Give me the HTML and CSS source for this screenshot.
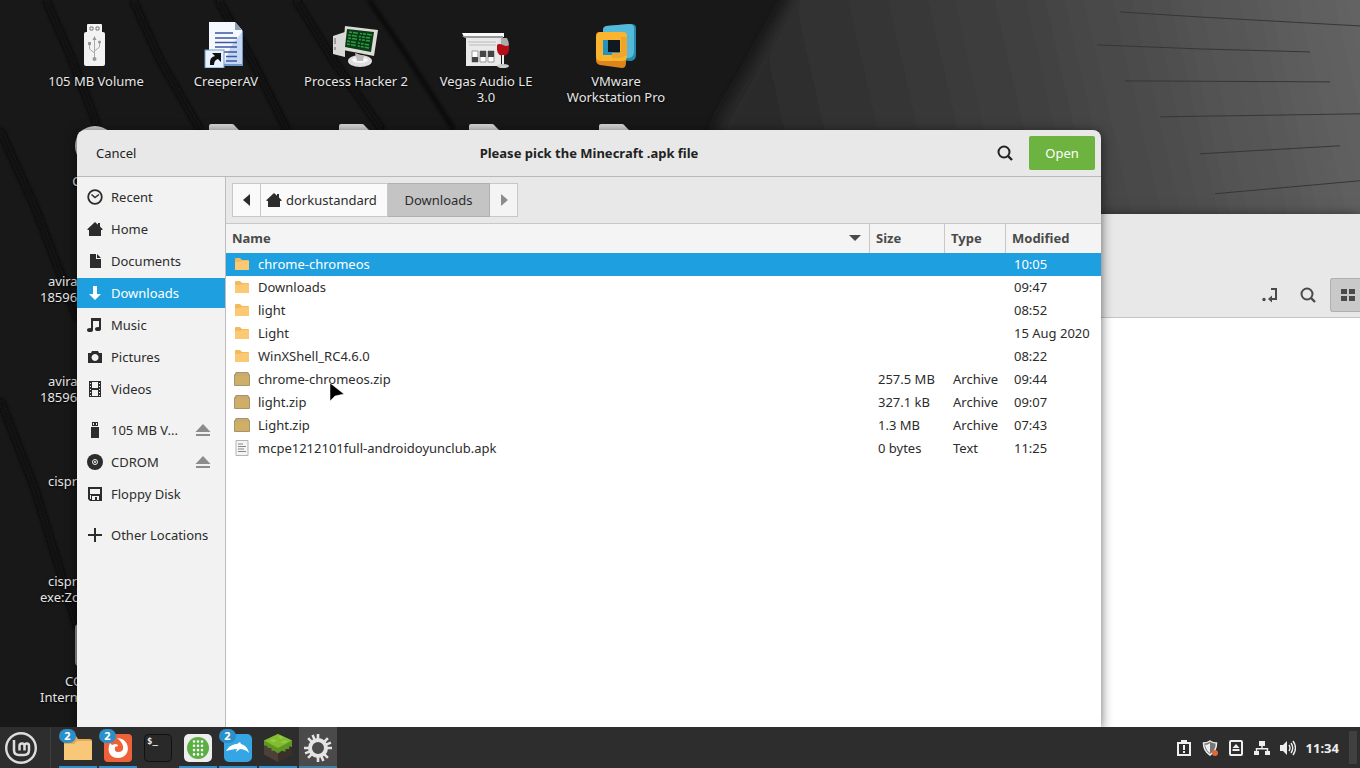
FILE: index.html
```html
<!DOCTYPE html>
<html lang="en">
<head>
    <meta charset="utf-8">
    <title>Please pick the Minecraft .apk file</title>
    <link rel="stylesheet" href="styles.css">
</head>
<body>
<!-- shared symbols -->
<svg class="defs" aria-hidden="true">
    <symbol id="home" viewBox="0 0 16 16"><path d="M8 1 0.5 8v1H2v6h12V9h1.5V8L13 5.6V2h-2v1.8z"/></symbol>
    <symbol id="search" viewBox="0 0 16 16"><circle cx="7" cy="7" r="5.5" fill="none" stroke="currentColor" stroke-width="2"/><path d="m11 11 4 4" stroke="currentColor" stroke-width="2.4"/></symbol>
    <symbol id="eject" viewBox="0 0 16 14"><path d="M8 1 15.500 9H.5zM1 11h14v2H1z"/></symbol>
    <symbol id="folder" viewBox="0 0 16 16"><path d="M1 3q0-1 1-1h4l2 2h6q1 0 1 1v9H1z" fill="#f3b95c"/><path d="M1 6h5l2-1h7v8q0 1-1 1H2q-1 0-1-1z" fill="#fbc974"/></symbol>
    <symbol id="zip" viewBox="0 0 16 16"><path d="M2 1h12l2 3v10q0 1-1 1H1q-1 0-1-1V4z" fill="#a89468"/><rect x="1" y="5" width="14" height="9" fill="#cfae68"/><path d="M2.500 2h11L15 5H1z" fill="#c9ab72"/></symbol>
    <symbol id="text" viewBox="0 0 16 16"><path d="M2 .5h12v15H2z" fill="#f4f4f4" stroke="#b4b4b4"/><path d="M4 4h5M4 6.500h8M4 9h6M4 11.500h8" stroke="#888"/></symbol>
    <symbol id="page" viewBox="0 0 48 48"><path d="M7 6q0-2 2-2h21q2 0 3 2l5 5v35H7z" fill="#d6d6d6"/></symbol>
</svg>

<main class="desktop">
    <svg class="wallpaper" viewBox="0 0 1360 728" preserveAspectRatio="none" aria-hidden="true">
        <defs>
            <linearGradient id="wall" gradientUnits="userSpaceOnUse" x1="740" y1="140" x2="1360" y2="0"><stop offset="0" stop-color="#292929"/><stop offset=".45" stop-color="#3f3f3f"/><stop offset="1" stop-color="#646464"/></linearGradient>
            <filter id="soft"><feGaussianBlur stdDeviation="2"/></filter>
            <filter id="edge"><feGaussianBlur stdDeviation="7"/></filter>
        </defs>
        <rect width="1360" height="728" fill="#181818"/>
        <path d="M812-40 720 120 640 400H1500V-40z" fill="url(#wall)" filter="url(#edge)"/>
        <g fill="none" stroke="#0a0a0a" stroke-width="6" filter="url(#soft)">
            <path d="M46 0 70 55 97 125M133 0 160 60 200 130M218 0 252 60 287 130M296 0 335 63 382 130M0 130 36 210 78 320M0 400 35 490 78 630"/>
            <path d="M369 0 403 50 454 130" stroke-width="3"/>
        </g>
        <g stroke="#363636" fill="none" stroke-width="1">
            <path d="M1120 12 1200 17 1360 26M1097 45 1200 49 1310 52M1125 81 1330 82M1160 117 1360 114M1200 154 1340 146M1215 194 1360 181"/>
        </g>
    </svg>

    <ul class="icons">
        <li><svg viewBox="0 0 48 48"><rect x="15" y="4" width="15" height="10" rx="1" fill="#f4f4f4"/><path d="M18 7h3v3h-3zM24 7h3v3h-3z" fill="#fff" stroke="#777"/><rect x="12" y="12" width="21" height="34" rx="2" fill="#f3f3f3"/><path d="M22.500 19v20M22.500 33l-5-4v-4M22.500 31l5-4v-4" fill="none" stroke="#aaa"/><path d="m22.500 16 2 4h-4zM16 22h3v3h-3z" fill="#999"/><circle cx="22.500" cy="39" r="2" fill="#999"/><circle cx="27.500" cy="22" r="1.500" fill="#999"/></svg><span>105 MB Volume</span></li>
        <li><svg viewBox="0 0 48 48"><path d="M8 3h26l7 8v35H8z" fill="#6e94c8"/><path d="M7 2h26l7 8v34H7z" fill="#f5f8ff"/><path d="M29 26 40 12v32H22z" fill="#c5d7f2"/><path d="M33 2v8h7z" fill="#8b9db5"/><path d="M13 13h18M13 18h22M13 22.500h22M13 27h22M20 32h15M24 36.500h11M24 41h11" stroke="#3d57a0" stroke-width="1.500"/><rect x="3" y="30" width="19" height="18" fill="#e8f1ff" stroke="#7598c0"/><path d="M8 45q-1-8 5-9l-3-3h9v9l-3-3q-4 1-4 6z" fill="#111"/></svg><span>CreeperAV</span></li>
        <li><svg viewBox="0 0 48 48"><path d="m1 16 12-4v25L1 34z" fill="#d9d9d9"/><path d="M3 18v6M3 27v3" stroke="#666"/><ellipse cx="28" cy="41" rx="12" ry="6" fill="#ddd"/><ellipse cx="28" cy="40" rx="8" ry="3" fill="#f7f7f7"/><path d="m23 33 9 3-1 5h-6z" fill="#bbb"/><path d="m13 6 33 4-4 26-31-6z" fill="#dcdcd4"/><path d="m15 9 27 3-3 20-26-5z" fill="#0b3b16"/><path d="m17 12 23 3M16 15l22 3M16 18l22 3M15 21l22 4M15 24l22 4" fill="none" stroke="#2f9c45" stroke-width="1.500" stroke-dasharray="3 1 5 2 2 1"/></svg><span>Process Hacker 2</span></li>
        <li><svg viewBox="0 0 48 48"><path d="M4 16h35v30H4z" fill="#e9e9e9"/><path d="M0 13h42v4H2z" fill="#fafafa"/><path d="M0 16h41v2H3z" fill="#999"/><path d="M6 22h28M7 25h27" stroke="#bbb"/><path d="M10 31h6v11h-6zM18 31h6v11h-6zM26 31h6v11h-6z" fill="#fff" stroke="#999"/><path d="M10 37h6v5h-6zM18 31h6v6h-6zM26 31h6v6h-6z" fill="#444"/><path d="M37 18q-4 10-1 14 4 6 9 0 4-6 0-14z" fill="#ddd" opacity=".75"/><path d="M35 25q2-2 6 0t6 0q1 11-6 11t-6-11z" fill="#b60c18"/><path d="M41 35v9" stroke="#eee" stroke-width="2"/><ellipse cx="41" cy="46" rx="6" ry="2" fill="#ccc"/></svg><span>Vegas Audio LE 3.0</span></li>
        <li><svg viewBox="0 0 48 48"><path d="m14 6 25-2q5 0 5 4v27q0 5-5 6l-28-2V10q0-3 3-4z" fill="#238dad"/><path d="m14 6 23-2q5 0 5 4v24q0 5-5 6l-26-2V10q0-3 3-4z" fill="#55b9da"/><path d="m7 12 23 1q4 0 4 4v26q0 5-4 5L8 45q-4-1-4-5V16q0-4 3-4z" fill="#dc851c"/><path d="M8 12h23q4 0 4 4v20q0 5-5 5H9q-5 0-5-5V17q0-4 4-5z" fill="#fbb42e"/><path d="M11 20h17v15H11z" fill="#2593bd"/><path d="M16 20h12v12H16z" fill="#101820"/><path d="M35 17v18l-6 3h-9v-5h9V17z" fill="#f0a42c"/></svg><span>VMware Workstation Pro</span></li>
        <li><svg viewBox="0 0 48 48"><circle cx="23" cy="26" r="20" fill="#cfcfcf"/></svg><span>CDROM</span></li>
        <li><svg><use href="#page"/></svg></li>
        <li><svg><use href="#page"/></svg></li>
        <li><svg><use href="#page"/></svg></li>
        <li><svg><use href="#page"/></svg></li>
        <li class="cut first"><svg><use href="#page"/></svg><span>avira_en<br>18596</span></li>
        <li class="cut first"><svg><use href="#page"/></svg><span>avira_en<br>18596</span></li>
        <li class="cut first"><svg><use href="#page"/></svg><span>cispremium</span></li>
        <li class="cut first"><svg><use href="#page"/></svg><span>cispremium<br>exe:Zone</span></li>
        <li class="cut first far"><svg viewBox="0 0 48 48"><rect x="4" y="5" width="40" height="40" rx="3" fill="#222" stroke="#999" stroke-width="2"/></svg><span>COMODO<br>Internet</span></li>
    </ul>

    <section class="window files-window">
        <div class="toolbar">
            <button aria-label="Toggle location entry"><svg viewBox="0 0 16 16"><path d="M9 2h5v10H7" fill="none" stroke="currentColor" stroke-width="2"/><path d="m6 12 4-3.500v7z"/><circle cx="2" cy="12.500" r="1.700"/></svg></button>
            <button aria-label="Search"><svg><use href="#search"/></svg></button>
            <button class="pressed" aria-label="Icon view"><svg viewBox="0 0 16 16"><path d="M1 2h6v5H1zM9 2h6v5H9zM1 9h6v5H1zM9 9h6v5H9z"/></svg></button>
        </div>
    </section>

    <section class="window dialog">
        <header class="titlebar">
            <button class="flat">Cancel</button>
            <h1>Please pick the Minecraft .apk file</h1>
            <div class="actions">
                <button class="flat" aria-label="Search"><svg><use href="#search"/></svg></button>
                <button class="open">Open</button>
            </div>
        </header>
        <div class="content">
            <nav class="places">
                <a href="#"><svg viewBox="0 0 16 16"><circle cx="8" cy="8" r="6.800" fill="none" stroke="currentColor" stroke-width="1.800"/><path d="m4.500 5.500 3.500 3 4-3" fill="none" stroke="currentColor" stroke-width="1.500"/></svg>Recent</a>
                <a href="#"><svg><use href="#home"/></svg>Home</a>
                <a href="#"><svg viewBox="0 0 16 16"><path d="M3 1h6v5h5v9H3z"/><path d="m10 1 4 4h-4z"/></svg>Documents</a>
                <a href="#" class="current"><svg viewBox="0 0 16 16"><path d="M6 1h4v8h4l-6 6-6-6h4z"/></svg>Downloads</a>
                <a href="#"><svg viewBox="0 0 16 16"><path d="M4 1h10v11h-2V4H6v9H4z"/><ellipse cx="3" cy="13" rx="3" ry="2"/><ellipse cx="11" cy="12" rx="3" ry="2"/></svg>Music</a>
                <a href="#"><svg viewBox="0 0 16 16"><path fill-rule="evenodd" d="M5 2h6l1 2h3v10H1V4h3zM8 5a3.500 3.500 0 1 0 .1 0z"/></svg>Pictures</a>
                <a href="#"><svg viewBox="0 0 16 16"><path fill-rule="evenodd" d="M2 0h12v16H2zM5 1v6h6V1zM5 9v6h6V9zM3 2v1h1V2zM3 5v1h1V5zM3 8v1h1V8zM3 11v1h1v-1zM3 14v1h1v-1zM12 2v1h1V2zM12 5v1h1V5zM12 8v1h1V8zM12 11v1h1v-1zM12 14v1h1v-1z"/></svg>Videos</a>
                <div class="place split">
                    <a href="#"><svg viewBox="0 0 16 16"><path fill-rule="evenodd" d="M5 0h6v4H5zM6 1v2h1V1zM9 1v2h1V1zM4 5h8v11H4z"/></svg>105 MB V...</a>
                    <button aria-label="Eject 105 MB Volume"><svg><use href="#eject"/></svg></button>
                </div>
                <div class="place">
                    <a href="#"><svg viewBox="0 0 16 16"><circle cx="8" cy="8" r="8"/><circle cx="8" cy="8" r="2.500" fill="none" stroke="#f2f2f2"/><circle cx="8" cy="8" r="1" fill="#f2f2f2"/></svg>CDROM</a>
                    <button aria-label="Eject CDROM"><svg><use href="#eject"/></svg></button>
                </div>
                <a href="#"><svg viewBox="0 0 16 16"><path fill-rule="evenodd" d="M1 1h14v14H3l-2-2zM3 3v5h10V3zM5 10v4h3v-3h2v3h2v-4zM3 9v4h1V9z"/></svg>Floppy Disk</a>
                <a href="#" class="split"><svg viewBox="0 0 16 16"><path d="M7 1h2v6h6v2H9v6H7V9H1V7h6z"/></svg>Other Locations</a>
            </nav>

            <div class="browser">
                <div class="pathbar">
                    <button aria-label="Back"><svg class="arrow" viewBox="0 0 8 12"><path d="M7 0v12L0 6z"/></svg></button>
                    <button class="crumb-home"><svg><use href="#home"/></svg>dorkustandard</button>
                    <button class="crumb">Downloads</button>
                    <button class="next" aria-label="Forward" disabled><svg class="arrow" viewBox="0 0 8 12"><path d="M1 0v12l7-6z"/></svg></button>
                </div>
                <table class="files">
                    <colgroup><col><col class="size"><col class="type"><col class="modified"></colgroup>
                    <thead>
                        <tr><th><div class="sorted">Name<svg viewBox="0 0 12 6"><path d="M0 0h12L6 6z"/></svg></div></th><th>Size</th><th>Type</th><th>Modified</th></tr>
                    </thead>
                    <tbody>
                        <tr class="selected"><td><svg><use href="#folder"/></svg>chrome-chromeos</td><td></td><td></td><td>10:05</td></tr>
                        <tr><td><svg><use href="#folder"/></svg>Downloads</td><td></td><td></td><td>09:47</td></tr>
                        <tr><td><svg><use href="#folder"/></svg>light</td><td></td><td></td><td>08:52</td></tr>
                        <tr><td><svg><use href="#folder"/></svg>Light</td><td></td><td></td><td>15 Aug 2020</td></tr>
                        <tr><td><svg><use href="#folder"/></svg>WinXShell_RC4.6.0</td><td></td><td></td><td>08:22</td></tr>
                        <tr><td><svg><use href="#zip"/></svg>chrome-chromeos.zip</td><td>257.5 MB</td><td>Archive</td><td>09:44</td></tr>
                        <tr><td><svg><use href="#zip"/></svg>light.zip</td><td>327.1 kB</td><td>Archive</td><td>09:07</td></tr>
                        <tr><td><svg><use href="#zip"/></svg>Light.zip</td><td>1.3 MB</td><td>Archive</td><td>07:43</td></tr>
                        <tr><td><svg><use href="#text"/></svg>mcpe1212101full-androidoyunclub.apk</td><td>0 bytes</td><td>Text</td><td>11:25</td></tr>
                    </tbody>
                </table>
            </div>
        </div>
    </section>
    <svg class="pointer" viewBox="0 0 16 20" aria-hidden="true"><path d="M1 1v18l5-5 9-2z" fill="#000" stroke="#fff" stroke-width=".5"/></svg>
</main>

<footer class="panel">
    <button class="menu" aria-label="Menu"><svg viewBox="0 0 32 32"><circle cx="16" cy="16" r="14.800" fill="none" stroke="#ddd" stroke-width="2.400"/><path d="M9 8v10q0 5 5 5h5q5 0 5-5v-4q0-2.500-2.200-2.500T19.500 14v4.500M19.500 14q0-2.500-2.500-2.500T14.500 14v4.500" fill="none" stroke="#ddd" stroke-width="2.500"/></svg></button>
    <div class="tasks">
        <button class="running" aria-label="Files"><svg viewBox="0 0 28 28"><path d="M0 4q0-2 2-2h10l2 3h12q2 0 2 2v18H0z" fill="#e4aa55"/><path d="M0 10h10l3-3h15v19H0z" fill="#f9c778"/></svg><b>2</b></button>
        <button class="running" aria-label="Firefox"><svg viewBox="0 0 28 28"><rect width="28" height="28" rx="4" fill="#ef6138"/><path d="M13 4q7 0 10 6c3 8-2 14-9 14S2 18 6 9l2 2 3-1q3 0 3 2l-3 1q-1 5 3 5 6 0 5-6-1-4-6-8z" fill="#fff"/></svg><b>2</b></button>
        <button aria-label="Terminal"><svg viewBox="0 0 28 28"><rect x=".5" y=".5" width="27" height="27" rx="4" fill="#292929" stroke="#111"/><text x="3" y="10" class="prompt">$_</text></svg></button>
        <button class="running" aria-label="Phone"><svg viewBox="0 0 28 28"><rect width="28" height="28" rx="5" fill="#eee"/><circle cx="14" cy="14" r="11" fill="#5cb043"/><path d="M10 7.500v14M14 7.500v14M18 7.500v14" stroke="#fff" stroke-width="2.600" stroke-linecap="round" stroke-dasharray="0 4.300"/></svg></button>
        <button class="running" aria-label="Dolphin"><svg viewBox="0 0 28 28"><rect width="28" height="28" rx="5" fill="#35a6e3"/><path d="M2 17c3-5 7-7 11-7l3-2 1 2c4 1 7 4 8 9-3-3-6-4-9-4l-4 3 1-3c-4 0-7 1-11 2z" fill="#fff"/></svg><b>2</b></button>
        <button class="running" aria-label="Minecraft"><svg viewBox="0 0 30 30"><path d="m15 0 15 8v14l-15 8-15-8V8z" fill="#4e4038"/><path d="m15 16 15-8v14l-15 8z" fill="#39302c"/><path d="m15 0 15 7v7l-3-1v3l-4 0v3l-4-1-4 3-4-3-3 0v-3l-4 0v-2l-4-1V7z" fill="#5f9624"/><path d="m15 0 15 7-15 8L0 7z" fill="#82bd31"/><path d="m6 7 4-2 4 2-4 2zM15 3l3-1 3 2-3 1zM18 9l4-2 4 1-5 2z" fill="#94cc42"/></svg></button>
        <button class="running active" aria-label="Settings"><svg viewBox="0 0 28 28"><circle cx="14" cy="14" r="8" fill="none" stroke="#e4e4e4" stroke-width="4"/><path d="M14 0v6M14 22v6M0 14h6M22 14h6M4.100 4.100l4.200 4.200M19.700 19.700l4.200 4.200M4.100 23.900l4.200-4.200M19.700 8.300l4.200-4.200M8.600 1.100l2.300 5.500M17.100 21.400l2.300 5.500M1.100 19.400l5.500-2.300M21.400 10.900l5.500-2.300" stroke="#e4e4e4" stroke-width="2.600"/></svg></button>
    </div>
    <div class="tray">
        <svg viewBox="0 0 16 16"><path fill-rule="evenodd" d="M1 2h4V0h6v2h4v14H1zM3 4v10h10V4z"/><path d="M7 5h2v5H7zM7 11h2v2H7z"/></svg>
        <svg viewBox="0 0 16 16"><path d="M8 1q3 2 6.500 2 0 8-6.500 12-6.500-4-6.500-12Q5 3 8 1z" fill="#777" stroke="#eee" stroke-width="1.500"/><path d="M8 3v10q-4-3-5-8 3 0 5-2z" fill="#eee"/><circle cx="13" cy="13" r="3" fill="#e4673a"/></svg>
        <svg viewBox="0 0 16 16"><rect x="2" y="1" width="12" height="14" rx="1" fill="none" stroke="#eee" stroke-width="2"/><path d="m8 4 3.500 4h-7zM4.500 9h7v2h-7z"/></svg>
        <svg viewBox="0 0 16 16"><path d="M5 1h6v5H5zM0 11h5v4H0zM11 11h5v4h-5z"/><path d="M8 6v3M2.500 11V8.700h11V11" fill="none" stroke="#eee" stroke-width="1.400"/></svg>
        <svg viewBox="0 0 16 16"><path d="M0 5h3l4-4v14l-4-4H0z"/><path d="M9 5q2 3 0 6M11 3q3.500 5 0 10M13 1q5 7 0 14" fill="none" stroke="#eee" stroke-width="1.400"/></svg>
        <time>11:34</time>
        <button aria-label="Show desktop"></button>
    </div>
</footer>
</body>
</html>
```
FILE: styles.css
```css
* {
    box-sizing: border-box;
}
body {
    margin: 0;
    height: 100vh;
    display: flex;
    flex-direction: column;
    overflow: hidden;
    background: #171717;
    color: #2c2c2c;
    font: 13px/16px "Noto Sans", "Open Sans", sans-serif;
}
button {
    border: 0;
    padding: 0;
    background: none;
    color: inherit;
    font: inherit;
}
a {
    color: inherit;
    text-decoration: none;
}
svg {
    width: 16px;
    height: 16px;
    flex: none;
    fill: currentColor;
}
.defs {
    position: absolute;
    width: 0;
    height: 0;
}

/* desktop */
.desktop {
    position: relative;
    flex: 1;
    min-height: 0;
    overflow: hidden;
}
.wallpaper {
    position: absolute;
    inset: 0;
    width: 100%;
    height: 100%;
}
.icons {
    position: absolute;
    top: 20px;
    left: 31px;
    margin: 0;
    padding: 0;
    display: grid;
    grid-template-columns: repeat(5, 130px);
    grid-auto-rows: 100px;
    list-style: none;
    color: #e6e6e6;
    text-align: center;
    text-shadow: 0 1px 2px #000;
}
.icons li {
    display: flex;
    flex-direction: column;
    align-items: center;
    gap: 5px;
}
.icons svg {
    width: 48px;
    height: 48px;
}
.icons span {
    width: 112px;
}
.icons .first {
    grid-column: 1;
}
.icons .cut span {
    text-align: left;
    text-indent: 8px;
    white-space: nowrap;
}
.icons .far span {
    text-indent: 25px;
}

/* windows */
.window {
    position: absolute;
    bottom: 0;
    box-shadow: 0 2px 12px rgba(0, 0, 0, 0.6);
}
.files-window {
    top: 214px;
    left: 600px;
    right: 0;
    background: #fff;
}
.toolbar {
    height: 104px;
    padding-bottom: 5px;
    display: flex;
    align-items: flex-end;
    justify-content: flex-end;
    background: #e8e8e8;
    border-bottom: 1px solid #c4c4c4;
    color: #4a4a4a;
}
.toolbar button {
    width: 38px;
    height: 34px;
    display: grid;
    place-items: center;
}
.toolbar .pressed {
    width: 30px;
    margin-left: 3px;
    padding-left: 4px;
    background: #c9c9c9;
    border: 1px solid #b0b0b0;
    border-right: 0;
    border-radius: 3px 0 0 3px;
}
.dialog {
    top: 130px;
    left: 77px;
    right: 259px;
    display: flex;
    flex-direction: column;
    background: #e8e8e8;
    border-radius: 8px 8px 0 0;
    overflow: hidden;
}
.titlebar {
    height: 47px;
    padding: 0 6px;
    display: grid;
    grid-template-columns: 1fr auto 1fr;
    align-items: center;
    border-bottom: 1px solid #b9b9b9;
    color: #222;
}
.titlebar h1 {
    margin: 0;
    font-size: 13px;
}
.titlebar > .flat {
    justify-self: start;
    padding-left: 13px;
}
.actions {
    display: flex;
    align-items: center;
    justify-content: flex-end;
    gap: 16px;
}
.actions .flat {
    height: 16px;
}
.open {
    width: 66px;
    height: 34px;
    background: #6cb33f;
    border-radius: 2px;
    color: #fff;
}
.content {
    flex: 1;
    min-height: 0;
    display: flex;
}

/* places sidebar */
.places {
    width: 149px;
    padding-top: 5px;
    display: flex;
    flex-direction: column;
    gap: 2px;
    background: #f2f2f2;
    border-right: 1px solid #bdbdbd;
}
.places a {
    height: 30px;
    padding-left: 10px;
    display: flex;
    align-items: center;
    gap: 8px;
    white-space: nowrap;
}
.places .current {
    background: #1e9fe0;
    color: #fff;
}
.places .split {
    margin-top: 9px;
}
.place {
    display: flex;
    align-items: center;
    padding-right: 14px;
}
.place a {
    flex: 1;
}
.place button {
    height: 16px;
    color: #8c8c8c;
}

/* file list */
.browser {
    flex: 1;
    min-width: 0;
    background: #fff;
}
.pathbar {
    height: 46px;
    padding: 6px;
    display: flex;
    background: #e8e8e8;
}
.pathbar button {
    height: 34px;
    min-width: 28px;
    display: flex;
    align-items: center;
    justify-content: center;
    gap: 4px;
    background: #fafafa;
    border: 1px solid #c8c8c8;
    border-left-width: 0;
}
.pathbar button:first-child {
    width: 29px;
    border-left-width: 1px;
}
.pathbar .crumb-home {
    width: 127px;
    padding-left: 5px;
    justify-content: flex-start;
}
.pathbar .crumb {
    width: 102px;
    background: #c4c4c4;
    border-color: #b0b0b0;
}
.pathbar .next {
    background: #f4f4f4;
    color: #8c8c8c;
}
.arrow {
    width: 8px;
    height: 12px;
}
.files {
    width: 100%;
    table-layout: fixed;
    border-collapse: separate;
    border-spacing: 0;
}
.size {
    width: 75px;
}
.type {
    width: 61px;
}
.modified {
    width: 95px;
}
.files th {
    height: 30px;
    padding: 0 0 2px 6px;
    background: #f4f4f4;
    border-top: 1px solid #c8c8c8;
    border-right: 1px solid #c8c8c8;
    color: #4a4a4a;
    text-align: left;
}
.files th:last-child {
    border-right: 0;
}
.sorted {
    display: flex;
    align-items: center;
    justify-content: space-between;
    padding-right: 8px;
}
.sorted svg {
    width: 12px;
    height: 6px;
}
.files td {
    height: 23px;
    padding: 0 0 0 8px;
    line-height: 22px;
    vertical-align: top;
    white-space: nowrap;
}
.files td svg {
    margin: 3px 8px 0 0;
    vertical-align: top;
}
.files .selected {
    background: #1e9fe0;
    color: #fff;
}
.pointer {
    position: absolute;
    top: 382px;
    left: 329px;
    height: 20px;
}

/* panel */
.panel {
    height: 41px;
    display: flex;
    background: #2d2d2d;
    color: #eee;
}
.menu {
    width: 51px;
    padding-left: 5px;
    border-right: 1px solid #3d3d3d;
    display: flex;
    align-items: center;
}
.menu svg {
    width: 32px;
    height: 32px;
}
.tasks {
    flex: 1;
    padding-left: 8px;
    display: flex;
    gap: 2px;
}
.tasks button {
    position: relative;
    width: 38px;
    padding-top: 2px;
    display: grid;
    place-items: center;
    border-bottom: 2px solid transparent;
}
.tasks svg {
    width: 28px;
    height: 28px;
}
.tasks b {
    position: absolute;
    top: 2px;
    left: 0;
    width: 17px;
    height: 14px;
    border-radius: 7px;
    background: #2b8fc9;
    color: #fff;
    font-size: 11px;
    line-height: 14px;
}
.tasks .running {
    border-color: #2a92cf;
}
.tasks .active {
    background: #4a4a4a;
    border-color: #3b81a6;
}
.prompt {
    fill: #eee;
    font: bold 9px "DejaVu Sans Mono", monospace;
}
.tray {
    display: flex;
    align-items: center;
    gap: 10px;
}
.tray time {
    font-weight: bold;
}
.tray button {
    width: 8px;
    height: 33px;
    margin-right: 3px;
    background: #404040;
}
```
